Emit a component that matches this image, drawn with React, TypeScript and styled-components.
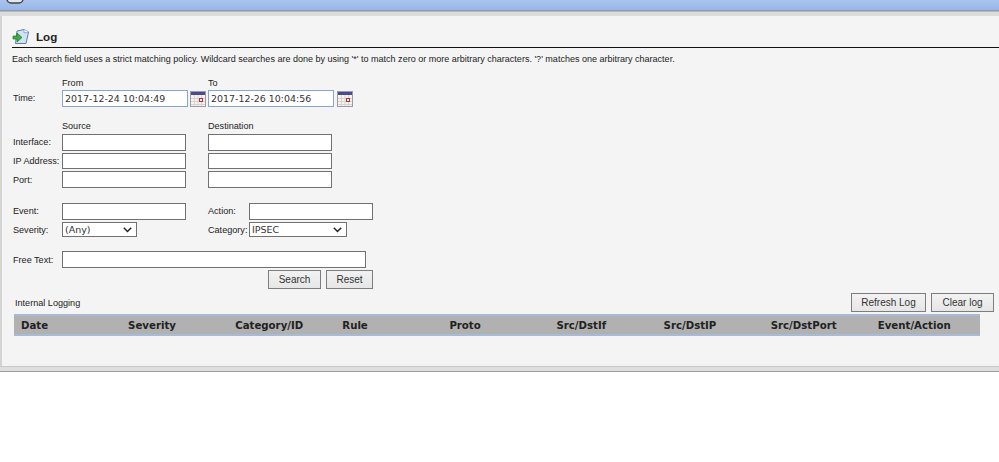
import React from "react";
import styled, { createGlobalStyle } from "styled-components";

const Global = createGlobalStyle`
  html, body { margin: 0; padding: 0; background: #fff; }
  body { font-family: "Liberation Sans", Arial, sans-serif; font-size: 10px; color: #222; }
`;

const Page = styled.div`
  width: 999px;
  height: 462px;
  overflow: hidden;
  background: #fff;
`;
const TopBar = styled.div`
  position: relative;
  height: 10px;
  background: linear-gradient(#a9c4ee, #98b7e8);
  border-bottom: 1px solid #8d9bb5;
  overflow: hidden;
`;
const TopIcon = styled.svg`
  position: absolute;
  left: 6px;
  top: -13px;
`;
const Strip = styled.div`
  height: 4px;
  background: #dcdcdc;
  border-top: 1px solid #b9b9bb;
`;
const Panel = styled.div`
  height: 350px;
  box-sizing: border-box;
  background: #f4f4f4;
  border-left: 2px solid #d4d4d4;
  padding: 11px 0 0 10px;
  display: flex;
  flex-direction: column;
`;
const Footer = styled.div`
  height: 6px;
  background: #dedede;
  border-top: 1px solid #c8c8c8;
  border-bottom: 1px solid #9d9d9f;
  box-sizing: border-box;
`;
const Title = styled.div`
  height: 21px;
  display: flex;
  align-items: center;
  gap: 6px;
  border-bottom: 1px solid #111;
  font-weight: bold;
  font-size: 11.6px;
  color: #222;
  padding-bottom: 1px;
  box-sizing: border-box;
`;
const Hint = styled.div`
  margin-top: 5px;
  height: 13px;
  line-height: 13px;
  font-size: 9.03px;
  color: #222;
  white-space: nowrap;
`;
const Row = styled.div<{ $top?: number; $h?: number }>`
  display: flex;
  align-items: center;
  margin-top: ${(p) => p.$top ?? 0}px;
  height: ${(p) => p.$h ?? 17}px;
`;
const Label = styled.span<{ $flat?: boolean }>`
  width: 50px;
  flex: none;
  padding-left: 1px;
  padding-bottom: ${(p) => (p.$flat ? 0 : 2)}px;
  box-sizing: border-box;
  font-size: 9.1px;
  white-space: nowrap;
`;
const Caption = styled.span<{ $w?: number; $lift?: boolean }>`
  font-size: 9.1px;
  white-space: nowrap;
  flex: none;
  width: ${(p) => (p.$w ? `${p.$w}px` : "auto")};
  padding-bottom: ${(p) => (p.$lift ? 2 : 0)}px;
`;
const Cell = styled.div<{ $w: number }>`
  width: ${(p) => p.$w}px;
  flex: none;
  display: flex;
  align-items: center;
  height: 100%;
`;
const Input = styled.input<{ $w?: number; $blue?: boolean; $h?: number }>`
  width: ${(p) => p.$w ?? 124}px;
  height: ${(p) => p.$h ?? 17}px;
  box-sizing: border-box;
  margin: 0;
  padding: 0 2px;
  background: #fff;
  border: 1px solid ${(p) => (p.$blue ? "#84a6cf" : "#717171")};
  font-family: "DejaVu Sans", sans-serif;
  font-size: 9.45px;
  color: #333;
  outline: none;
`;
const SelectBox = styled.div<{ $w: number }>`
  width: ${(p) => p.$w}px;
  height: 15px;
  box-sizing: border-box;
  border: 1px solid #717171;
  background: #fff;
  display: flex;
  align-items: center;
  justify-content: space-between;
  padding: 0 4px 0 2px;
  font-family: "DejaVu Sans", sans-serif;
  font-size: 9.5px;
  color: #333;
`;
const CalWrap = styled.svg<{ $gap?: number }>`
  margin-left: ${(p) => p.$gap ?? 2}px;
  flex: none;
`;
const Button = styled.button<{ $w: number }>`
  width: ${(p) => p.$w}px;
  height: 19px;
  box-sizing: border-box;
  margin: 0;
  padding: 0;
  border: 1px solid #7d7d7d;
  background: linear-gradient(#f2f2f2, #e6e6e6);
  font-family: "Liberation Sans", sans-serif;
  font-size: 10px;
  color: #333;
`;
const Actions = styled.div`
  display: flex;
  gap: 5px;
  margin-top: 2px;
  margin-left: 256px;
`;
const LogBar = styled.div`
  margin-top: 3px;
  height: 20px;
  display: flex;
  align-items: center;
  justify-content: space-between;
  padding: 0 5px 0 3px;
`;
const LogLabel = styled.span`
  font-size: 9.1px;
  position: relative;
  top: 1px;
`;
const LogButtons = styled.div`
  display: flex;
  gap: 5px;
`;
const Table = styled.div`
  margin: 2px 0 0 2px;
  width: 966px;
  height: 22px;
  box-sizing: border-box;
  background: #b1b1b1;
  border-top: 2px solid #a9b9d3;
  border-bottom: 2px solid #a9bad4;
  display: grid;
  grid-template-columns: repeat(9, 107.1px);
  align-items: center;
`;
const Th = styled.div`
  padding-left: 7px;
  font-family: "DejaVu Sans", sans-serif;
  font-weight: bold;
  font-size: 10.2px;
  color: #222;
  white-space: nowrap;
`;

const Calendar = ({ gap }: { gap?: number }) => (
  <CalWrap $gap={gap} width="16" height="16" viewBox="0 0 16 16">
    <rect x="0.5" y="0.5" width="15" height="15" fill="#f6f3f0" stroke="#9a9aa8" />
    <rect x="1" y="1" width="14" height="3" fill="#4a4a8c" />
    <path d="M1 7.5H15M1 10.5H15M1 13.5H15M4.5 4V15M8 4V15M11.5 4V15" stroke="#d9d2cc" strokeWidth="1" />
    <rect x="9.5" y="7.5" width="3" height="3" fill="#fff" stroke="#b03040" />
  </CalWrap>
);

const Chevron = () => (
  <svg width="9" height="6" viewBox="0 0 9 6">
    <path d="M0.8 0.8 L4.5 4.5 L8.2 0.8" fill="none" stroke="#222" strokeWidth="1.5" />
  </svg>
);

const LogIcon = () => (
  <svg width="18" height="18" viewBox="0 0 18 18">
    <path d="M5 3 L12 1.5 L16.5 4 L14 15.5 L3.5 15.5 Z" fill="#cfe2f6" stroke="#5f7f9f" strokeWidth="1" />
    <path d="M12 1.5 L12 5 L16.5 4" fill="#f5f9fd" stroke="#7a97b3" strokeWidth="0.7" />
    <path d="M1 8 H5 V5 L10 9.5 L5 14 V11 H1 Z" fill="#3fae3f" stroke="#1f7a2a" strokeWidth="0.7" />
  </svg>
);

const cols = ["Date", "Severity", "Category/ID", "Rule", "Proto", "Src/DstIf", "Src/DstIP", "Src/DstPort", "Event/Action"];

export default function App() {
  return (
    <Page>
      <Global />
      <TopBar>
        <TopIcon width="18" height="18" viewBox="0 0 18 18">
          <rect x="1" y="1" width="16" height="15" rx="4" fill="#dfe7f2" stroke="#444" strokeWidth="1.4" />
        </TopIcon>
      </TopBar>
      <Strip />
      <Panel>
        <Title>
          <LogIcon />
          <span>Log</span>
        </Title>
        <Hint>
          Each search field uses a strict matching policy. Wildcard searches are done by using '*' to match zero or more arbitrary characters. '?' matches one arbitrary character.
        </Hint>
        <Row $top={11} $h={12}>
          <Cell $w={50} />
          <Cell $w={146}><Caption>From</Caption></Cell>
          <Caption>To</Caption>
        </Row>
        <Row $top={1}>
          <Label>Time:</Label>
          <Cell $w={146}>
            <Input $w={126} $blue readOnly value="2017-12-24 10:04:49" />
            <Calendar />
          </Cell>
          <Input $w={126} $blue readOnly value="2017-12-26 10:04:56" />
          <Calendar gap={3} />
        </Row>
        <Row $top={12} $h={13}>
          <Cell $w={50} />
          <Cell $w={146}><Caption>Source</Caption></Cell>
          <Caption>Destination</Caption>
        </Row>
        <Row $top={2}>
          <Label>Interface:</Label>
          <Cell $w={146}><Input /></Cell>
          <Input />
        </Row>
        <Row $top={2} $h={16}>
          <Label $flat>IP Address:</Label>
          <Cell $w={146}><Input $h={16} /></Cell>
          <Input $h={16} />
        </Row>
        <Row $top={2}>
          <Label $flat>Port:</Label>
          <Cell $w={146}><Input /></Cell>
          <Input />
        </Row>
        <Row $top={15}>
          <Label>Event:</Label>
          <Cell $w={146}><Input /></Cell>
          <Caption $w={41} $lift>Action:</Caption>
          <Input />
        </Row>
        <Row $top={2} $h={15}>
          <Label $flat>Severity:</Label>
          <Cell $w={146}><SelectBox $w={75}><span>(Any)</span><Chevron /></SelectBox></Cell>
          <Caption $w={41}>Category:</Caption>
          <SelectBox $w={98}><span>IPSEC</span><Chevron /></SelectBox>
        </Row>
        <Row $top={14}>
          <Label $flat>Free Text:</Label>
          <Input $w={304} />
        </Row>
        <Actions>
          <Button $w={53}>Search</Button>
          <Button $w={47}>Reset</Button>
        </Actions>
        <LogBar>
          <LogLabel>Internal Logging</LogLabel>
          <LogButtons>
            <Button $w={75}>Refresh Log</Button>
            <Button $w={63}>Clear log</Button>
          </LogButtons>
        </LogBar>
        <Table>
          {cols.map((c) => <Th key={c}>{c}</Th>)}
        </Table>
      </Panel>
      <Footer />
    </Page>
  );
}
